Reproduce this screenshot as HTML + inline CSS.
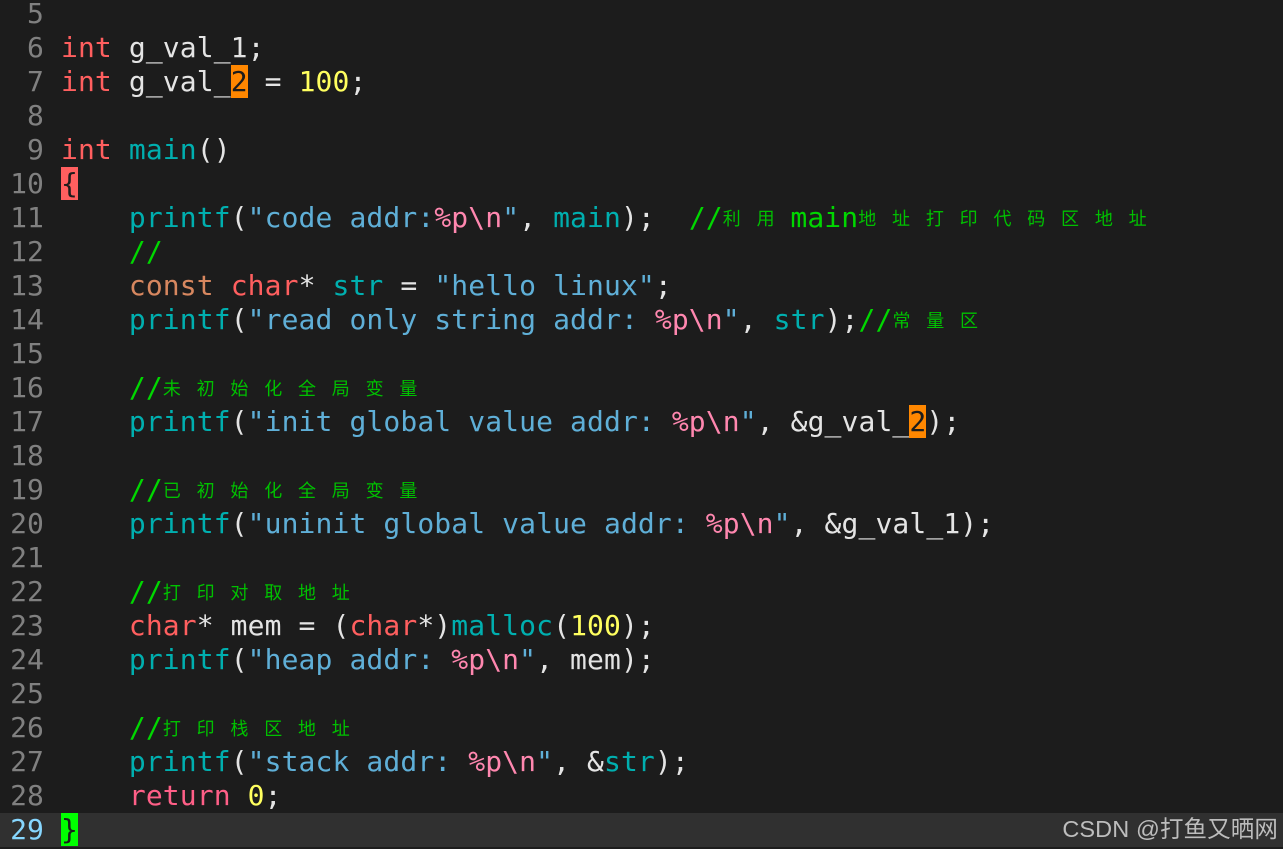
<!DOCTYPE html>
<html><head><meta charset="utf-8"><style>
html,body{margin:0;padding:0;background:#1c1c1c;width:1283px;height:849px;overflow:hidden}
.w{position:relative;width:1283px;height:849px;font-family:"DejaVu Sans Mono","Liberation Mono","Noto Sans CJK SC",monospace;font-size:28px;letter-spacing:0.11px;color:#e4e4e4}
.l{position:absolute;left:0;width:1283px;height:34px;line-height:34px;white-space:pre}
.n{position:absolute;left:0;width:44px;text-align:right;color:#808080}
.c{position:absolute;left:61px}
.cur{background:#303030}
.cur .n{color:#87d7ff}
.k{color:#ff5f5f}.f{color:#00afaf}.s{color:#5fafd7}.e{color:#ff87af}.y{color:#ffff5f}
.g{color:#00d700}.o{color:#d7875f}.r{color:#ff5f87}
.z{display:inline-block;width:33.8px;font-size:18px;letter-spacing:0;font-family:"Noto Sans CJK SC",sans-serif;vertical-align:top;color:#00c000}
.hl{background:#ff8700;color:#1c1c1c}
.wm{position:absolute;right:5px;top:812px;font-family:"Liberation Sans","Noto Sans CJK SC",sans-serif;font-size:23.5px;color:#bdbdbd;line-height:34px}
</style></head><body><div class="w">
<div class="l" style="top:-3px"><span class="n">5</span></div>
<div class="l" style="top:31px"><span class="n">6</span><span class="c"><span class="k">int</span> g_val_1;</span></div>
<div class="l" style="top:65px"><span class="n">7</span><span class="c"><span class="k">int</span> g_val_<span class="hl">2</span> = <span class="y">100</span>;</span></div>
<div class="l" style="top:99px"><span class="n">8</span></div>
<div class="l" style="top:133px"><span class="n">9</span><span class="c"><span class="k">int</span> <span class="f">main</span>()</span></div>
<div class="l" style="top:167px"><span class="n">10</span><span class="c"><span style="background:#ff5f5f;color:#1c1c1c">{</span></span></div>
<div class="l" style="top:201px"><span class="n">11</span><span class="c">    <span class="f">printf</span>(<span class="s">"code addr:</span><span class="e">%p\n</span><span class="s">"</span>, <span class="f">main</span>);  <span class="g">//</span><span class="z">利</span><span class="z">用</span><span class="g">main</span><span class="z">地</span><span class="z">址</span><span class="z">打</span><span class="z">印</span><span class="z">代</span><span class="z">码</span><span class="z">区</span><span class="z">地</span><span class="z">址</span></span></div>
<div class="l" style="top:235px"><span class="n">12</span><span class="c">    <span class="g">//</span></span></div>
<div class="l" style="top:269px"><span class="n">13</span><span class="c">    <span class="o">const</span> <span class="k">char</span>* <span class="f">str</span> = <span class="s">"hello linux"</span>;</span></div>
<div class="l" style="top:303px"><span class="n">14</span><span class="c">    <span class="f">printf</span>(<span class="s">"read only string addr: </span><span class="e">%p\n</span><span class="s">"</span>, <span class="f">str</span>);<span class="g">//</span><span class="z">常</span><span class="z">量</span><span class="z">区</span></span></div>
<div class="l" style="top:337px"><span class="n">15</span></div>
<div class="l" style="top:371px"><span class="n">16</span><span class="c">    <span class="g">//</span><span class="z">未</span><span class="z">初</span><span class="z">始</span><span class="z">化</span><span class="z">全</span><span class="z">局</span><span class="z">变</span><span class="z">量</span></span></div>
<div class="l" style="top:405px"><span class="n">17</span><span class="c">    <span class="f">printf</span>(<span class="s">"init global value addr: </span><span class="e">%p\n</span><span class="s">"</span>, &amp;g_val_<span class="hl">2</span>);</span></div>
<div class="l" style="top:439px"><span class="n">18</span></div>
<div class="l" style="top:473px"><span class="n">19</span><span class="c">    <span class="g">//</span><span class="z">已</span><span class="z">初</span><span class="z">始</span><span class="z">化</span><span class="z">全</span><span class="z">局</span><span class="z">变</span><span class="z">量</span></span></div>
<div class="l" style="top:507px"><span class="n">20</span><span class="c">    <span class="f">printf</span>(<span class="s">"uninit global value addr: </span><span class="e">%p\n</span><span class="s">"</span>, &amp;g_val_1);</span></div>
<div class="l" style="top:541px"><span class="n">21</span></div>
<div class="l" style="top:575px"><span class="n">22</span><span class="c">    <span class="g">//</span><span class="z">打</span><span class="z">印</span><span class="z">对</span><span class="z">取</span><span class="z">地</span><span class="z">址</span></span></div>
<div class="l" style="top:609px"><span class="n">23</span><span class="c">    <span class="k">char</span>* mem = (<span class="k">char</span>*)<span class="f">malloc</span>(<span class="y">100</span>);</span></div>
<div class="l" style="top:643px"><span class="n">24</span><span class="c">    <span class="f">printf</span>(<span class="s">"heap addr: </span><span class="e">%p\n</span><span class="s">"</span>, mem);</span></div>
<div class="l" style="top:677px"><span class="n">25</span></div>
<div class="l" style="top:711px"><span class="n">26</span><span class="c">    <span class="g">//</span><span class="z">打</span><span class="z">印</span><span class="z">栈</span><span class="z">区</span><span class="z">地</span><span class="z">址</span></span></div>
<div class="l" style="top:745px"><span class="n">27</span><span class="c">    <span class="f">printf</span>(<span class="s">"stack addr: </span><span class="e">%p\n</span><span class="s">"</span>, &amp;<span class="f">str</span>);</span></div>
<div class="l" style="top:779px"><span class="n">28</span><span class="c">    <span class="r">return</span> <span class="y">0</span>;</span></div>
<div class="l cur" style="top:813px"><span class="n">29</span><span class="c"><span style="background:#00ff00;color:#1c1c1c">}</span></span></div>
<div class="wm">CSDN @打鱼又晒网</div>
</div></body></html>
